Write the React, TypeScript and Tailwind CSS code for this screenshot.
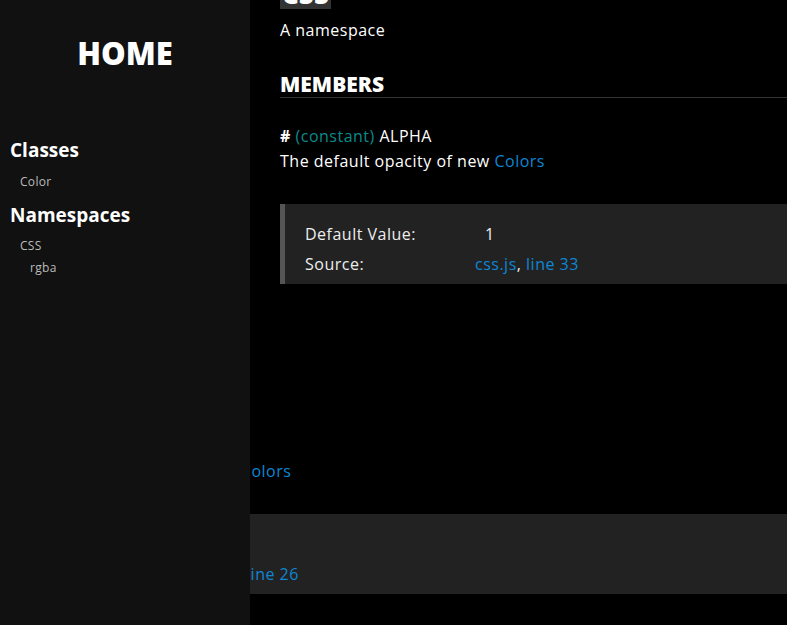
const sans = { fontFamily: "'Open Sans', 'Noto Sans', sans-serif" };

function MemberBox({ value, line }: { value: string; line: number }) {
  return (
    <div className="border-l-[5px] border-[#555] bg-[#222] pl-[20px] pt-[15px] pb-[5px] text-[16px] leading-[30px] tracking-[0.5px] text-[#eee]">
      <div className="grid grid-cols-[170px_1fr]">
        <span>Default Value:</span>
        <span className="pl-[10px]">{value}</span>
        <span>Source:</span>
        <span>
          <a className="text-[#0e86d4]">css.js</a>,{" "}
          <a className="text-[#0e86d4]">line {line}</a>
        </span>
      </div>
    </div>
  );
}

export default function App() {
  return (
    <div className="relative h-[625px] overflow-hidden bg-black text-white" style={sans}>
      {/* Sidebar */}
      <nav className="fixed left-0 top-0 z-10 h-full w-[250px] bg-[#111] pl-[10px]">
        <h2 className="pt-[33px] pr-[10px] text-center text-[31px] font-extrabold leading-[40px] text-white">
          HOME
        </h2>
        <h3 className="mt-[64px] text-[19px] font-bold leading-[26px]">Classes</h3>
        <ul className="mt-[8px] pl-[10px] text-[12px] leading-[22px] tracking-[0.3px] text-[#bbb]">
          <li>Color</li>
        </ul>
        <h3 className="mt-[9px] text-[19px] font-bold leading-[26px]">Namespaces</h3>
        <ul className="mt-[7px] pl-[10px] text-[12px] leading-[22px] tracking-[0.3px] text-[#bbb]">
          <li>CSS</li>
          <li className="pl-[10px]">rgba</li>
        </ul>
      </nav>

      {/* Main content */}
      <main className="pl-[280px] tracking-[0.5px]">
        <h1 className="-mt-[21px] w-fit bg-[#333] px-[2px] text-[26px] font-extrabold leading-[30px] tracking-normal">
          CSS
        </h1>
        <p className="mt-[11px] text-[16px] leading-[20px]">A namespace</p>

        <h3 className="mt-[31px] border-b border-[#333] text-[21px] font-extrabold leading-[26px] tracking-normal">
          MEMBERS
        </h3>

        <div className="mt-[26px] text-[16px] leading-[25px]">
          <span className="font-bold">#</span>{" "}
          <span className="text-[#0b8a8a]">(constant)</span> ALPHA
        </div>
        <p className="text-[16px] leading-[25px]">
          The default opacity of new <a className="text-[#0e86d4]">Colors</a>
        </p>
        <div className="mt-[30px]">
          <MemberBox value="1" line={33} />
        </div>

        {/* next member, partly behind the sidebar */}
        <div className="-ml-[280px] mt-[150px]">
          <div className="text-[16px] leading-[25px]">
            <span className="font-bold">#</span>{" "}
            <span className="text-[#0b8a8a]">(constant)</span> DEFAULT
          </div>
          <p className="text-[16px] leading-[25px]">
            The default brightness of new <a className="text-[#0e86d4]">Colors</a>
          </p>
          <div className="mt-[30px]">
            <MemberBox value="0" line={26} />
          </div>
        </div>
      </main>
    </div>
  );
}
